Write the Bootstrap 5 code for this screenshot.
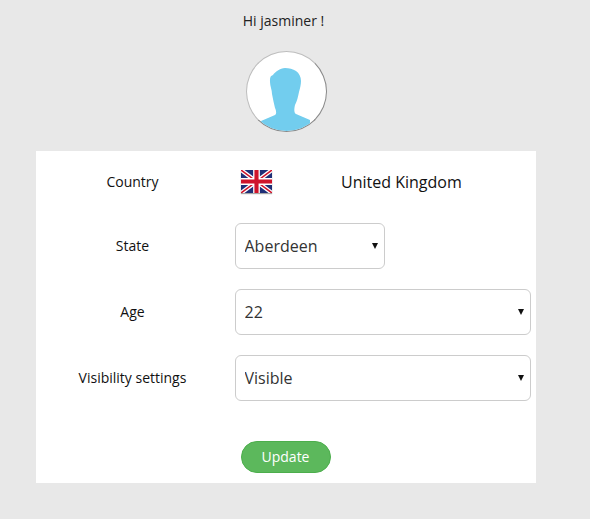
<!DOCTYPE html>
<html lang="en">
  <head>
    <meta charset="UTF-8" />
    <meta name="viewport" content="width=device-width, initial-scale=1.0" />
    <title>Profile</title>
    <link href="https://cdn.jsdelivr.net/npm/bootstrap@5.3.0/dist/css/bootstrap.min.css" rel="stylesheet" />
    <style>
      body {
        background-color: #e8e8e8;
        font-family: "Open Sans", "Noto Sans", sans-serif;
        color: #222;
        font-size: 14px;
      }
      .page-wrap {
        width: 500px;
        margin-left: 36px;
      }
      .greeting {
        height: 51px;
        padding-top: 11px;
        line-height: 19px;
        padding-right: 5px;
      }
      .avatar {
        width: 81px;
        height: 81px;
        margin-left: 210px;
        border-radius: 50%;
        background: #fff;
        border: 1px solid #bdbdbd;
        border-right-color: #888;
        border-bottom-color: #888;
        overflow: hidden;
      }
      .avatar svg {
        display: block;
      }
      .panel {
        margin-top: 19px;
        height: 332px;
        background: #fff;
      }
      .field-row {
        margin-bottom: 20px;
      }
      .field-label {
        width: 194px;
        margin-right: 5px;
        padding: 0 1px 2px 0;
        text-align: center;
        color: #111;
        flex: none;
      }
      .country-row {
        height: 62px;
        margin-bottom: 10px;
      }
      .flag {
        margin-left: 6px;
        margin-top: -2px;
        display: block;
        box-shadow: 0 1px 1px rgba(0, 0, 0, .35);
      }
      .country-name {
        margin-left: 69px;
        padding-bottom: 1px;
        font-size: 16px;
        color: #111;
      }
      .form-select.pick {
        height: 46px;
        width: 296px;
        padding: 0 24px 0 8.5px;
        font-size: 16px;
        color: #333;
        border: 1px solid #ccc;
        border-radius: 6px;
        background-image: url("data:image/svg+xml,%3Csvg xmlns='http://www.w3.org/2000/svg' width='6' height='6'%3E%3Cpath d='M0 0h6L3 6z' fill='%23111'/%3E%3C/svg%3E");
        background-position: right 6px center;
        background-size: 6px 6px;
      }
      .form-select.pick-short {
        width: 150px;
      }
      .update-btn {
        display: block;
        width: 90px;
        height: 32px;
        padding: 0 1px 1px 0;
        margin: 40px 0 0 205px;
        font-size: 14px;
        color: #fff;
        background-color: #5cb85c;
        border: 1px solid #4cae4c;
        border-radius: 16px;
      }
    </style>
  </head>
  <body>
    <div class="page-wrap">
      <div class="greeting text-center">Hi jasminer !</div>
      <div class="avatar">
        <svg width="79" height="79" viewBox="0 0 79 79">
          <path fill="#72cdee" d="M14 69 L28 63 C30 62 29 58 28 56 C27 52 26 47 25 42 C25 38 23 34 23 30 C23 26 23 24 26 23 C28 20 33 16 38 16 C42 16 46 17 49 19 C52 21 54 25 54 29 C54 33 53 36 52 40 C51 45 50 49 48 53 C47 57 47 61 49 62 L63 68 L63 79 L14 79 Z"/>
        </svg>
      </div>
      <div class="panel">
        <div class="d-flex align-items-center country-row">
          <div class="field-label">Country</div>
          <svg class="flag" width="31" height="23" viewBox="0 0 60 44" preserveAspectRatio="none">
            <rect width="60" height="44" fill="#1f2f77"/>
            <path d="M0 0 60 44M60 0 0 44" stroke="#fff" stroke-width="8"/>
            <path d="M0 0 60 44M60 0 0 44" stroke="#cf142b" stroke-width="3"/>
            <path d="M30 0v44M0 22h60" stroke="#fff" stroke-width="13"/>
            <path d="M30 0v44M0 22h60" stroke="#cf142b" stroke-width="8"/>
          </svg>
          <div class="country-name">United Kingdom</div>
        </div>
        <div class="d-flex align-items-center field-row">
          <div class="field-label">State</div>
          <select class="form-select pick pick-short"><option>Aberdeen</option></select>
        </div>
        <div class="d-flex align-items-center field-row">
          <div class="field-label">Age</div>
          <select class="form-select pick"><option>22</option></select>
        </div>
        <div class="d-flex align-items-center field-row">
          <div class="field-label">Visibility settings</div>
          <select class="form-select pick"><option>Visible</option></select>
        </div>
        <button type="button" class="btn update-btn">Update</button>
      </div>
    </div>
    <script src="https://cdn.jsdelivr.net/npm/bootstrap@5.3.0/dist/js/bootstrap.bundle.min.js"></script>
  </body>
</html>
